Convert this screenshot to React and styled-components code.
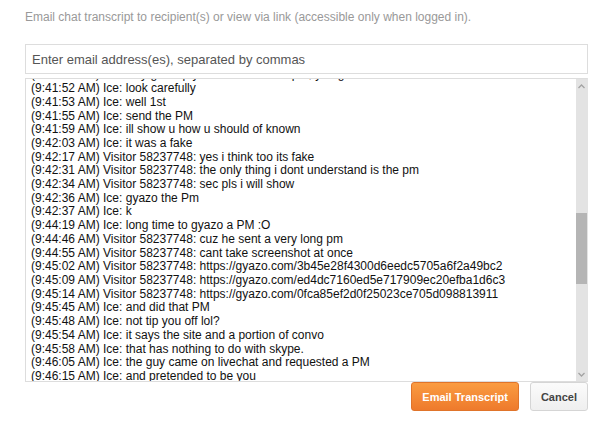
import React from "react";
import styled, { createGlobalStyle } from "styled-components";

const GlobalStyle = createGlobalStyle`
  body {
    margin: 0;
    background: #fff;
    font-family: "Liberation Sans", Arial, sans-serif;
  }
`;

const Dialog = styled.div`
  display: flex;
  flex-direction: column;
  padding: 10px 28px 0 25px;
`;

const Intro = styled.p`
  margin: 0 0 20px;
  font-size: 12px;
  color: #999;
`;

const EmailInput = styled.input`
  box-sizing: border-box;
  height: 30px;
  border: 1px solid #ddd;
  padding: 0 6px;
  font: 13px "Liberation Sans", Arial, sans-serif;
  color: #333;
  outline: none;
  &::placeholder {
    color: #555;
  }
`;

const TranscriptBox = styled.div`
  box-sizing: border-box;
  display: flex;
  height: 304px;
  margin-top: 4px;
  border: 1px solid #ddd;
  border-right-color: #e3e3e3;
`;

const TranscriptText = styled.div`
  flex: 1;
  overflow: hidden;
  padding: 0 5px;
  font-size: 12px;
  line-height: 13.7px;
  color: #111;
  white-space: nowrap;
`;

const Lines = styled.div`
  margin-top: -10.55px;
`;

const Scrollbar = styled.div`
  width: 11px;
  display: flex;
  flex-direction: column;
  background: #e3e3e3;
`;

const ScrollArrow = styled.div`
  height: 14px;
  display: flex;
  align-items: center;
  justify-content: center;
  margin-top: ${(p) => (p.$bottom ? "auto" : "0")};
`;

const Thumb = styled.div`
  height: 71px;
  margin-top: ${(p) => p.$offset}px;
  background: #b5b5b5;
`;

const ButtonRow = styled.div`
  display: flex;
  justify-content: flex-end;
  gap: 11px;
`;

const Button = styled.button`
  height: 29px;
  padding: 0 10px;
  border-radius: 3px;
  font: bold 11px "Liberation Sans", Arial, sans-serif;
  cursor: pointer;
  border: 1px solid ${(p) => (p.$primary ? "#e0742a" : "#d5d5d5")};
  color: ${(p) => (p.$primary ? "#fff" : "#444")};
  background: ${(p) =>
    p.$primary
      ? "linear-gradient(#fa9c41, #ee7a2c)"
      : "linear-gradient(#fbfbfb, #efefef)"};
`;

const Chevron = ({ down }) => (
  <svg width="7" height="5" viewBox="0 0 7 5">
    <path
      d={down ? "M0.5 1 L3.5 4 L6.5 1" : "M0.5 4 L3.5 1 L6.5 4"}
      fill="none"
      stroke="#a3a3a3"
      strokeWidth="1.3"
    />
  </svg>
);

const lines = [
  "(9:41:50 AM) Ice: why give up your account for a pm, you goof",
  "(9:41:52 AM) Ice: look carefully",
  "(9:41:53 AM) Ice: well 1st",
  "(9:41:55 AM) Ice: send the PM",
  "(9:41:59 AM) Ice: ill show u how u should of known",
  "(9:42:03 AM) Ice: it was a fake",
  "(9:42:17 AM) Visitor 58237748: yes i think too its fake",
  "(9:42:31 AM) Visitor 58237748: the only thing i dont understand is the pm",
  "(9:42:34 AM) Visitor 58237748: sec pls i will show",
  "(9:42:36 AM) Ice: gyazo the Pm",
  "(9:42:37 AM) Ice: k",
  "(9:44:19 AM) Ice: long time to gyazo a PM :O",
  "(9:44:46 AM) Visitor 58237748: cuz he sent a very long pm",
  "(9:44:55 AM) Visitor 58237748: cant take screenshot at once",
  "(9:45:02 AM) Visitor 58237748: https://gyazo.com/3b45e28f4300d6eedc5705a6f2a49bc2",
  "(9:45:09 AM) Visitor 58237748: https://gyazo.com/ed4dc7160ed5e717909ec20efba1d6c3",
  "(9:45:14 AM) Visitor 58237748: https://gyazo.com/0fca85ef2d0f25023ce705d098813911",
  "(9:45:45 AM) Ice: and did that PM",
  "(9:45:48 AM) Ice: not tip you off lol?",
  "(9:45:54 AM) Ice: it says the site and a portion of convo",
  "(9:45:58 AM) Ice: that has nothing to do with skype.",
  "(9:46:05 AM) Ice: the guy came on livechat and requested a PM",
  "(9:46:15 AM) Ice: and pretended to be you",
  "(9:46:22 AM) Ice: so you gave it to him",
];

const App = () => {
  return (
    <>
      <GlobalStyle />
      <Dialog>
        <Intro>
          Email chat transcript to recipient(s) or view via link (accessible
          only when logged in).
        </Intro>
        <EmailInput placeholder="Enter email address(es), separated by commas" />
        <TranscriptBox>
          <TranscriptText>
            <Lines>
              {lines.map((line, i) => (
                <div key={i}>{line}</div>
              ))}
            </Lines>
          </TranscriptText>
          <Scrollbar>
            <ScrollArrow>
              <Chevron />
            </ScrollArrow>
            <Thumb $offset={120} />
            <ScrollArrow $bottom>
              <Chevron down />
            </ScrollArrow>
          </Scrollbar>
        </TranscriptBox>
        <ButtonRow>
          <Button $primary>Email Transcript</Button>
          <Button>Cancel</Button>
        </ButtonRow>
      </Dialog>
    </>
  );
};

export default App;
